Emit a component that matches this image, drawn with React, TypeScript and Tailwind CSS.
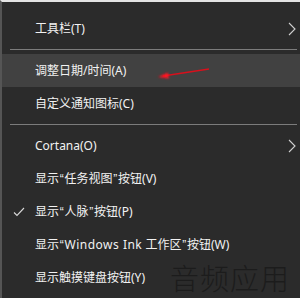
import { Fragment, ReactNode } from "react";

type Item = { label: ReactNode; sub?: boolean; checked?: boolean; active?: boolean } | "sep";

// narrow quotes like the Windows UI font, not the full-width CJK ones
const Q = ({ c }: { c: string }) => <span className="px-[0.75px] font-['Liberation_Sans',sans-serif]">{c}</span>;

const items: Item[] = [
  { label: "工具栏(T)", sub: true },
  "sep",
  { label: "调整日期/时间(A)", active: true },
  { label: "自定义通知图标(C)" },
  "sep",
  { label: "Cortana(O)", sub: true },
  { label: <>显示<Q c="“" />任务视图<Q c="”" />按钮(V)</> },
  { label: <>显示<Q c="“" />人脉<Q c="”" />按钮(P)</>, checked: true },
  { label: <>显示<Q c="“" /><span className="tracking-[0.5px]">Windows Ink</span> 工作区<Q c="”" />按钮(W)</> },
  { label: "显示触摸键盘按钮(Y)" },
];

function Chevron() {
  return (
    <svg width="8" height="14" viewBox="0 0 8 14" className="text-[#d0d0d0]">
      <path d="M1 1 L7 7 L1 13" fill="none" stroke="currentColor" strokeWidth="1.1" />
    </svg>
  );
}

function Check() {
  return (
    <svg width="12" height="10" viewBox="0 0 12 10" className="text-[#d8d8d8]">
      <path d="M1 5.5 L4 8.5 L11 1" fill="none" stroke="currentColor" strokeWidth="1.1" />
    </svg>
  );
}

export default function App() {
  return (
    <div className="relative w-[300px] h-[298px] overflow-hidden bg-[#2b2b2b] border-t-2 border-t-[#e4e4e4] border-l-2 border-l-[#555555] font-['Noto_Sans','Noto_Sans_CJK_SC',sans-serif] text-[12px] text-[#f2f2f2] select-none">
      <div className="pt-[10px]">
        {items.map((it, i) =>
          it === "sep" ? (
            <div key={i} className="h-[9px] flex items-center pl-[8px] pr-[3px]">
              <div className="h-px w-full bg-[#7c7c7c]" />
            </div>
          ) : (
            <Fragment key={i}>
              <div className={`h-[33px] flex items-center pr-[4px] ${it.active ? "bg-[#414141]" : ""}`}>
                <div className="w-[33px] flex justify-center pl-[1px]">{it.checked && <Check />}</div>
                <span className="flex-1 leading-none whitespace-nowrap">{it.label}</span>
                {it.sub && <Chevron />}
              </div>
            </Fragment>
          )
        )}
      </div>

      <svg className="absolute left-0 top-0 pointer-events-none" width="300" height="298">
        <defs>
          <filter id="blur" x="-50%" y="-50%" width="200%" height="200%">
            <feGaussianBlur stdDeviation="1.2" />
          </filter>
        </defs>
        <path d="M161 74 L207 67" stroke="#d8101c" strokeWidth="1.3" fill="none" />
        <path d="M156 75 L166 70.5 L167 76.5 Z" fill="#ff1424" filter="url(#blur)" />
      </svg>

      <div className="absolute right-[10px] bottom-[6px] text-[29px] leading-none tracking-[1px] text-[#1c1c1c] font-['Noto_Sans_CJK_SC',sans-serif] font-light pointer-events-none">
        音频应用
      </div>
    </div>
  );
}
